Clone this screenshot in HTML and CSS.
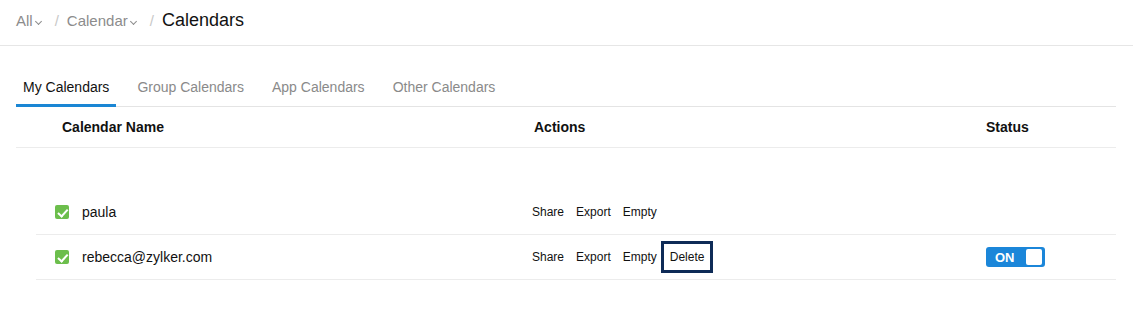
FILE: index.html
```html
<!DOCTYPE html>
<html lang="en">
  <head>
    <meta charset="UTF-8" />
    <title>Calendars</title>
    <link rel="stylesheet" href="styles.css">
  </head>
  <body>
    <header class="topbar">
      <nav class="crumbs">
        <a href="#" class="crumb">All<span class="caret"></span></a>
        <span class="sep">/</span>
        <a href="#" class="crumb">Calendar<span class="caret"></span></a>
        <span class="sep">/</span>
        <span class="crumb-current">Calendars</span>
      </nav>
    </header>

    <main class="content">
      <div class="tabs">
        <a href="#" class="tab active">My Calendars</a>
        <a href="#" class="tab">Group Calendars</a>
        <a href="#" class="tab">App Calendars</a>
        <a href="#" class="tab">Other Calendars</a>
      </div>

      <div class="table-head">
        <div>Calendar Name</div>
        <div>Actions</div>
        <div>Status</div>
      </div>

      <div class="rows">
        <div class="row">
          <div class="name"><span class="check"></span>paula</div>
          <div class="actions">
            <a href="#">Share</a>
            <a href="#">Export</a>
            <a href="#">Empty</a>
          </div>
          <div class="status"></div>
        </div>
        <div class="row">
          <div class="name"><span class="check"></span>rebecca@zylker.com</div>
          <div class="actions">
            <a href="#">Share</a>
            <a href="#">Export</a>
            <a href="#">Empty</a>
            <a href="#" class="focused">Delete</a>
          </div>
          <div class="status">
            <span class="toggle">ON<span class="knob"></span></span>
          </div>
        </div>
      </div>
    </main>
  </body>
</html>
```

FILE: styles.css
```css
* {
  margin: 0;
  padding: 0;
  box-sizing: border-box;
}

body {
  font-family: 'Liberation Sans', Arial, sans-serif;
  color: #111;
  background: #fff;
}

a {
  color: inherit;
  text-decoration: none;
}

/* Breadcrumb bar */
.topbar {
  height: 46px;
  border-bottom: 1px solid #e6e6e6;
  padding: 0 16px 4px;
  display: flex;
  align-items: center;
}

.crumbs {
  display: flex;
  align-items: baseline;
  font-size: 15px;
  color: #8c8c8c;
}

.crumb {
  display: inline-flex;
  align-items: baseline;
}

.caret {
  display: inline-block;
  width: 5px;
  height: 5px;
  border-right: 1.3px solid #8c8c8c;
  border-bottom: 1.3px solid #8c8c8c;
  transform: rotate(45deg);
  margin: 0 1px 0 3px;
  position: relative;
  top: -2px;
}

.sep {
  color: #c8c8c8;
  margin: 0 8px 0 13px;
}

.crumb-current {
  font-size: 18px;
  color: #111;
}

/* Tabs + table */
.content {
  width: 1100px;
  margin: 23px 0 0 16px;
}

.tabs {
  display: flex;
  gap: 14px;
  border-bottom: 1px solid #e4e4e4;
}

.tab {
  font-size: 14px;
  color: #8a8a8a;
  padding: 10px 7px 9px;
  border-bottom: 3px solid transparent;
  margin-bottom: -1px;
}

.tab.active {
  color: #111;
  border-bottom-color: #1a86d4;
}

.table-head {
  display: grid;
  grid-template-columns: 472px 452px 1fr;
  padding-left: 46px;
  height: 41px;
  align-items: center;
  font-size: 14px;
  font-weight: bold;
  border-bottom: 1px solid #ececec;
}

.rows {
  margin: 42px 0 0 20px;
}

.row {
  display: grid;
  grid-template-columns: 477px 454px 1fr;
  padding-left: 19px;
  height: 45px;
  align-items: center;
  border-bottom: 1px solid #ececec;
}

.name {
  display: flex;
  align-items: center;
  font-size: 14px;
}

.check {
  width: 14px;
  height: 14px;
  border-radius: 2px;
  background: #6cbe4c;
  margin-right: 13px;
  position: relative;
}

.check::after {
  content: '';
  position: absolute;
  left: 4.5px;
  top: 1.5px;
  width: 4px;
  height: 7.5px;
  border-right: 2px solid #fff;
  border-bottom: 2px solid #fff;
  transform: rotate(42deg);
}

.actions {
  display: flex;
  align-items: center;
  gap: 12px;
  font-size: 12px;
}

.actions .focused {
  border: 3px solid #0e2b57;
  padding: 6px 6px;
  margin-left: -8px;
}

.toggle {
  display: inline-flex;
  align-items: center;
  justify-content: space-between;
  width: 59px;
  height: 20px;
  border-radius: 3px;
  background: #1b86d9;
  color: #fff;
  font-size: 13px;
  font-weight: bold;
  padding: 0 3px 0 9px;
}

.knob {
  width: 16px;
  height: 16px;
  border-radius: 2px;
  background: #fff;
}
```
